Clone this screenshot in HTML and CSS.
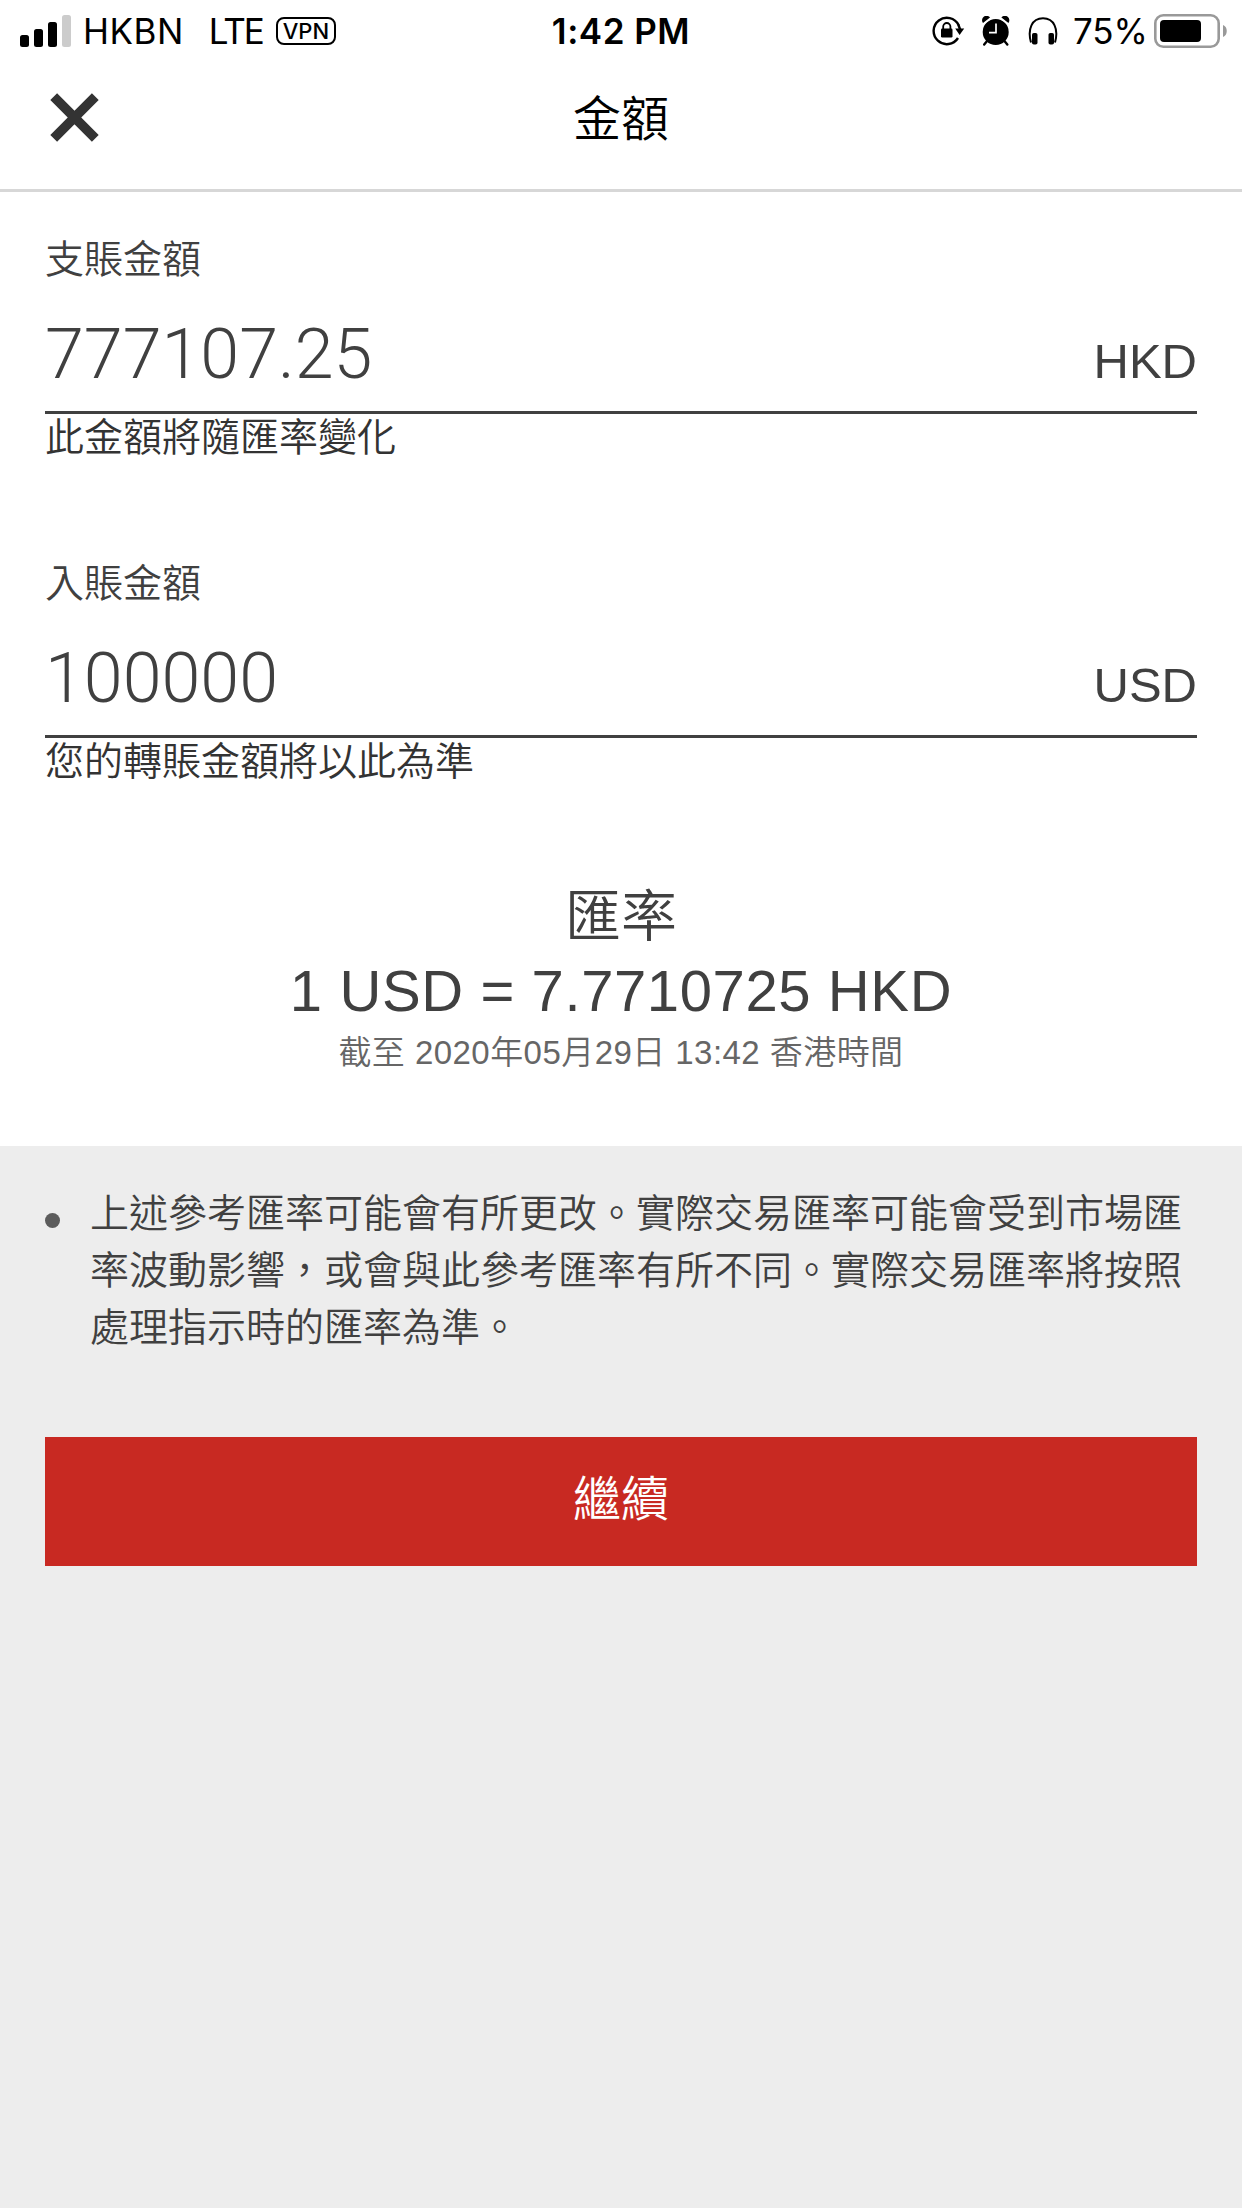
FILE: index.html
```html
<!DOCTYPE html>
<html lang="zh-HK">
<head>
    <meta charset="UTF-8">
    <title>金額</title>
    <link rel="stylesheet" href="styles.css">
</head>
<body>
    <div class="status-bar">
        <div class="status-left">
            <svg class="signal" width="51" height="32" viewBox="0 0 51 32">
                <rect x="0" y="20" width="9" height="12" rx="2.5"/>
                <rect x="14" y="14" width="9" height="18" rx="2.5"/>
                <rect x="28" y="7" width="9" height="25" rx="2.5"/>
                <rect x="42" y="0" width="9" height="32" rx="2.5" fill="#ccc"/>
            </svg>
            <span class="carrier">HKBN</span>
            <span class="network">LTE</span>
            <span class="vpn">VPN</span>
        </div>
        <div class="status-time">1:42 PM</div>
        <div class="status-right">
            <svg class="lock-icon" width="33" height="30" viewBox="0 0 33 30">
                <path d="M26 22A13.2 13.2 0 1 1 26.6 9" fill="none" stroke="#000" stroke-width="2.4"/>
                <path d="M23.2 12.5h9l-4.600 6.500z"/>
                <path d="M26.300 8.500l1.800 5" stroke="#000" stroke-width="2.4"/>
                <rect x="9" y="12.5" width="11.5" height="9" rx="1.2"/>
                <path d="M11.2 13v-2.4a3.6 3.6 0 0 1 7.2 0V13" fill="none" stroke="#000" stroke-width="1.8"/>
            </svg>
            <svg class="alarm-icon" width="28" height="30" viewBox="0 0 28 30">
                <path d="M2.300 24.800A13.300 13.300 0 0 0 25.100 24.800" fill="none"/>
                <circle cx="13.7" cy="16" r="13"/>
                <path d="M1 7A4.200 4.200 0 0 1 8 1.500zM26.400 7a4.200 4.200 0 0 0-7-5.500z"/>
                <path d="M.5 8.800L9.500 1.900M26.900 8.800l-9-6.900" stroke="#fff" stroke-width="1.2"/>
                <path d="M5.5 24.5l-3.3 4M22 24.5l3.3 4" stroke="#000" stroke-width="2.4" stroke-linecap="round"/>
                <path d="M14 7.5v9.2H7" fill="none" stroke="#fff" stroke-width="1.7"/>
            </svg>
            <svg class="headphones-icon" width="30" height="28" viewBox="0 0 30 28">
                <path d="M3 25.5C-.8 12 4 1.3 15 1.3S30.8 12 27 25.5" fill="none" stroke="#000" stroke-width="2"/>
                <rect x="4" y="16" width="5.5" height="11.5" rx="1.8"/>
                <rect x="20.5" y="16" width="5.5" height="11.5" rx="1.8"/>
            </svg>
            <span class="battery-text">75%</span>
            <svg class="battery-icon" width="74" height="34" viewBox="0 0 74 34">
                <rect x="1.3" y="1.3" width="63.4" height="31.4" rx="8" fill="none" stroke="#999" stroke-width="2.6"/>
                <rect x="6" y="6" width="41" height="22" rx="4"/>
                <path d="M69 11c5 1.5 5 10.5 0 12z" fill="#999"/>
            </svg>
        </div>
    </div>

    <div class="header">
        <button class="close" type="button" aria-label="關閉">
            <svg width="49" height="49" viewBox="0 0 49 49">
                <path d="M3.7 3.7l41.6 41.6M45.3 3.7L3.7 45.3" stroke="#333" stroke-width="9.6"/>
            </svg>
        </button>
        <div class="title">金額</div>
    </div>

    <div class="amounts">
        <div class="field">
            <label class="field-label" for="debit">支賬金額</label>
            <div class="field-row">
                <input type="text" id="debit" value="777107.25">
                <span class="currency">HKD</span>
            </div>
            <div class="field-hint">此金額將隨匯率變化</div>
        </div>
        <div class="field">
            <label class="field-label" for="credit">入賬金額</label>
            <div class="field-row">
                <input type="text" id="credit" value="100000">
                <span class="currency">USD</span>
            </div>
            <div class="field-hint">您的轉賬金額將以此為準</div>
        </div>
        <div class="rate">
            <div class="rate-title">匯率</div>
            <div class="rate-value">1 USD = 7.7710725 HKD</div>
            <div class="rate-time">截至 2020年05月29日 13:42 香港時間</div>
        </div>
    </div>

    <div class="footer">
        <ul class="notes">
            <li>上述參考匯率可能會有所更改。實際交易匯率可能會受到市場匯率波動影響，或會與此參考匯率有所不同。實際交易匯率將按照處理指示時的匯率為準。</li>
        </ul>
        <button class="continue" type="button">繼續</button>
    </div>
</body>
</html>
```
FILE: styles.css
```css
* {
    box-sizing: border-box;
}
body {
    margin: 0;
    min-height: 2208px;
    display: flex;
    flex-direction: column;
    background-color: #fff;
    color: #404040;
    font-family: 'Liberation Sans', 'Noto Sans CJK TC', sans-serif;
    font-weight: 350;
}
button,
input {
    border: 0;
    padding: 0;
    margin: 0;
    background: none;
    color: inherit;
    font-family: inherit;
}

/* status bar */
.status-bar {
    display: grid;
    grid-template-columns: 1fr auto 1fr;
    height: 60px;
    padding: 0 18px 0 20px;
    color: #000;
    font-family: Inter, sans-serif;
    font-size: 35px;
    font-weight: 400;
    line-height: 62px;
    white-space: nowrap;
}
.status-left,
.status-right {
    display: flex;
    align-items: center;
}
.status-right {
    justify-content: flex-end;
}
.signal {
    margin-right: 12px;
}
.carrier {
    letter-spacing: 0.5px;
}
.network {
    margin-left: 25px;
    letter-spacing: -2px;
}
.vpn {
    width: 60px;
    height: 28px;
    margin-left: 13px;
    border: 2px solid #000;
    border-radius: 8px;
    font-size: 22px;
    font-weight: 500;
    line-height: 24px;
    text-align: center;
}
.status-time {
    margin-right: 2px;
    font-weight: 600;
    letter-spacing: 0.5px;
}
.alarm-icon {
    margin-left: 17px;
}
.headphones-icon {
    margin-left: 18px;
}
.battery-text {
    margin-left: 15px;
}
.battery-icon {
    margin-left: 6px;
    margin-right: -4px;
}

/* header */
.header {
    display: grid;
    grid-template-columns: 1fr auto 1fr;
    align-items: center;
    height: 132px;
    padding: 0 45px 15px;
    border-bottom: 3px solid #d7d7d7;
}
.close {
    display: flex;
    margin-left: 5px;
}
.title {
    padding-top: 5px;
    color: #000;
    font-size: 48px;
    line-height: 60px;
}

/* amount fields */
.amounts {
    height: 954px;
    padding: 39px 45px 0;
}
.field {
    height: 324px;
}
.field-label {
    display: block;
    font-size: 39px;
    line-height: 57px;
}
.field-row {
    display: flex;
    align-items: baseline;
    justify-content: space-between;
    height: 126px;
    padding-top: 25px;
    border-bottom: 3px solid #404040;
}
.field-row input {
    width: 800px;
    height: 82px;
    font-family: Roboto, sans-serif;
    font-size: 70px;
    font-weight: 300;
}
.currency {
    font-size: 49px;
}
.field-hint {
    color: #333;
    font-size: 39px;
    line-height: 48px;
}

/* exchange rate */
.rate {
    padding-top: 2px;
    text-align: center;
}
.rate-title {
    font-size: 56px;
    line-height: 72px;
}
.rate-value {
    font-size: 58px;
    line-height: 76px;
    letter-spacing: 0.6px;
}
.rate-time {
    color: #666;
    font-size: 33px;
    line-height: 48px;
    letter-spacing: 0.45px;
}

/* notes and button */
.footer {
    flex: 1;
    padding: 39px 45px 0;
    background-color: #ededed;
}
.notes {
    margin: 0 0 81px;
    padding: 0;
    list-style: none;
}
.notes li {
    display: flex;
    font-size: 39px;
    line-height: 57px;
}
.notes li::before {
    content: '';
    flex: none;
    width: 15px;
    height: 15px;
    margin: 28px 30px 0 0;
    border-radius: 50%;
    background-color: #5c5c5c;
}
.continue {
    display: block;
    width: 100%;
    height: 129px;
    padding-bottom: 14px;
    background-color: #c82922;
    color: #fff;
    font-size: 48px;
    font-weight: 350;
}
```
